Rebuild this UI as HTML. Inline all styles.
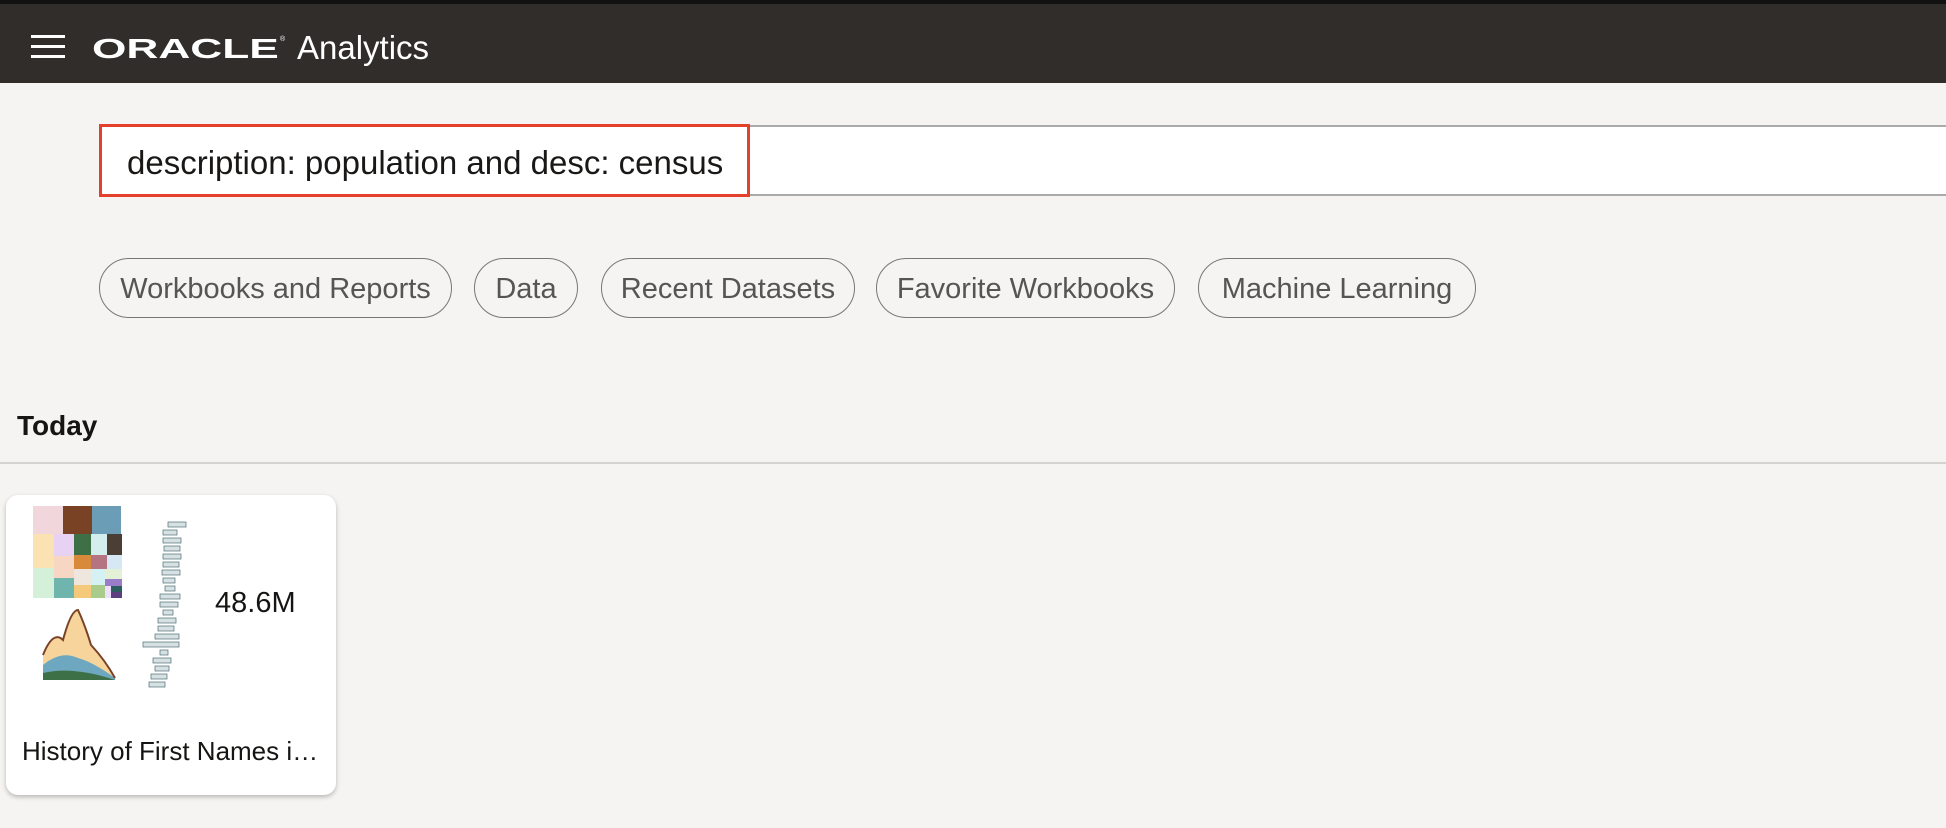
<!DOCTYPE html>
<html><head><meta charset="utf-8"><style>
*{margin:0;padding:0;box-sizing:border-box}
body{width:1946px;height:828px;background:#f5f4f2;font-family:"Liberation Sans",sans-serif;position:relative;overflow:hidden}
.hdr{position:absolute;left:0;top:0;width:1946px;height:83px;background:#312d2a;border-top:4px solid #111}
.ham{position:absolute;left:31px;width:34px;height:3px;background:#fff}
.logo{position:absolute;left:92px;top:31px;color:#fff;font-size:28px;font-weight:bold;transform:scaleX(1.58);transform-origin:left;line-height:28px}
.an{position:absolute;left:297px;top:25px;color:#fff;font-size:33px}
.search{position:absolute;left:99px;top:125px;width:1900px;height:71px;background:#fff;border:2px solid #aaa;border-right:none}
.red{position:absolute;left:99px;top:124px;width:651px;height:73px;border:3px solid #e4402b}
.stxt{position:absolute;left:127px;top:144px;font-size:33px;color:#1a1816;white-space:nowrap}
.pill{position:absolute;top:258px;height:60px;border:1.5px solid #777;border-radius:30px;font-size:29px;color:#555;line-height:60px;text-align:center;white-space:nowrap}
.today{position:absolute;left:17px;top:410px;font-size:28px;font-weight:bold;color:#161513}
.line{position:absolute;left:0;top:462px;width:1946px;height:2px;background:#d5d3d0}
.card{position:absolute;left:6px;top:495px;width:330px;height:300px;background:#fff;border-radius:12px;box-shadow:0 2px 5px rgba(0,0,0,.25)}
.num{position:absolute;left:209px;top:92px;font-size:29px;color:#161513}
.ttl{position:absolute;left:16px;top:241px;font-size:26px;color:#161513;white-space:nowrap}
</style></head><body>
<div class="hdr">
<div class="ham" style="top:31px"></div><div class="ham" style="top:41px"></div><div class="ham" style="top:51px"></div>
<div class="logo">ORACLE</div><span style="position:absolute;left:280px;top:32px;color:#fff;font-size:7px">®</span>
<div class="an">Analytics</div>
</div>
<div class="search"></div><div class="red"></div>
<div class="stxt">description: population and desc: census</div>
<div class="pill" style="left:99px;width:353px">Workbooks and Reports</div>
<div class="pill" style="left:474px;width:104px">Data</div>
<div class="pill" style="left:601px;width:254px">Recent Datasets</div>
<div class="pill" style="left:876px;width:299px">Favorite Workbooks</div>
<div class="pill" style="left:1198px;width:278px">Machine Learning</div>
<div class="today">Today</div>
<div class="line"></div>
<div class="card">
<svg style="position:absolute;left:27px;top:5px" width="200" height="200" viewBox="0 0 200 200">
<rect x="0" y="6" width="30" height="28" fill="#f1d6dc"/><rect x="30" y="6" width="29" height="28" fill="#7a4225"/><rect x="59" y="6" width="29" height="28" fill="#6b9db6"/>
<rect x="0" y="34" width="21" height="34" fill="#fbe2b3"/><rect x="21" y="34" width="20" height="22" fill="#e7d2f3"/><rect x="41" y="34" width="17" height="21" fill="#3e7048"/><rect x="58" y="34" width="16" height="21" fill="#d4eeed"/><rect x="74" y="34" width="15" height="21" fill="#4b3e35"/>
<rect x="21" y="56" width="20" height="22" fill="#f7d6c4"/><rect x="41" y="55" width="17" height="14" fill="#d88a3a"/><rect x="58" y="55" width="16" height="14" fill="#b47482"/><rect x="74" y="55" width="15" height="14" fill="#d5e8f4"/>
<rect x="0" y="68" width="21" height="30" fill="#d5f0d8"/><rect x="21" y="78" width="20" height="20" fill="#6fb4ad"/><rect x="41" y="69" width="17" height="16" fill="#efe6dd"/><rect x="58" y="69" width="14" height="16" fill="#d5f1f3"/><rect x="72" y="69" width="17" height="10" fill="#e5f1d7"/><rect x="72" y="79" width="17" height="7" fill="#9b7cc9"/>
<rect x="41" y="85" width="17" height="13" fill="#f4c97a"/><rect x="58" y="85" width="14" height="13" fill="#a9cc8d"/><rect x="72" y="86" width="6" height="12" fill="#eee0fa"/><rect x="78" y="86" width="11" height="6" fill="#2e5d60"/><rect x="78" y="92" width="11" height="6" fill="#5d3e7e"/>
<path d="M10 180 L10 155 Q20 130 30 140 Q38 110 45 110 Q52 125 58 145 Q72 160 82 178 L82 180Z" fill="#f6d49b"/>
<path d="M10 180 L10 165 Q28 150 45 158 Q60 162 82 178 L82 180Z" fill="#6ea8c0"/>
<path d="M10 180 L10 173 Q40 166 82 180Z" fill="#3e7048"/>
<path d="M10 155 Q20 130 30 140 Q38 110 45 110 Q52 125 58 145 Q72 160 82 178" stroke="#7a4225" stroke-width="2" fill="none"/>
<g fill="#d7e0e2" stroke="#4a6f74" stroke-width=".7">
<rect x="135" y="22" width="18" height="5"/><rect x="130" y="30" width="14" height="5"/><rect x="130" y="38" width="18" height="5"/><rect x="131" y="46" width="16" height="5"/><rect x="130" y="54" width="18" height="5"/><rect x="130" y="62" width="16" height="5"/><rect x="129" y="70" width="18" height="5"/><rect x="130" y="78" width="12" height="5"/><rect x="132" y="86" width="10" height="5"/><rect x="127" y="94" width="20" height="5"/><rect x="127" y="102" width="18" height="5"/><rect x="130" y="110" width="10" height="5"/><rect x="125" y="118" width="18" height="5"/><rect x="125" y="126" width="16" height="5"/><rect x="122" y="134" width="24" height="5"/><rect x="110" y="142" width="36" height="5"/><rect x="127" y="150" width="8" height="5"/><rect x="120" y="158" width="18" height="5"/><rect x="122" y="166" width="14" height="5"/><rect x="118" y="174" width="16" height="5"/><rect x="116" y="182" width="16" height="5"/></g>
</svg>
<div class="num">48.6M</div>
<div class="ttl">History of First Names i…</div>
</div>
</body></html>
